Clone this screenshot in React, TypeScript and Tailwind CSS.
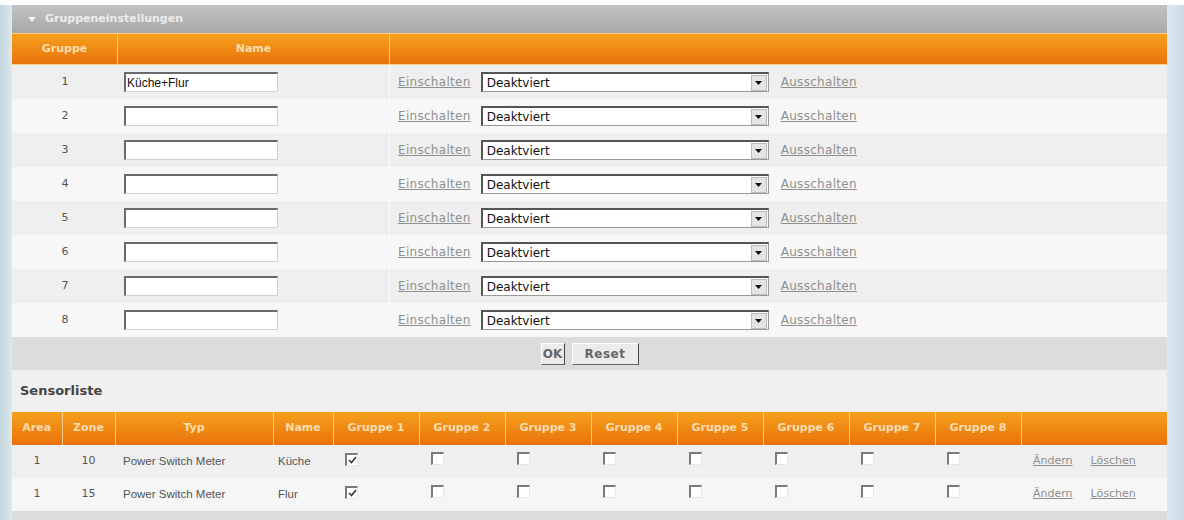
import React from "react";

const groups = [1, 2, 3, 4, 5, 6, 7, 8];

const sensors = [
  { area: 1, zone: 10, typ: "Power Switch Meter", name: "Küche" },
  { area: 1, zone: 15, typ: "Power Switch Meter", name: "Flur" },
];

function Box({ checked }: { checked?: boolean }) {
  return (
    <span className="inline-flex h-[13px] w-[13px] items-center justify-center border-t-2 border-l-2 border-r border-b border-t-[#7a7a7a] border-l-[#7a7a7a] border-r-[#e8e8e8] border-b-[#e8e8e8] bg-white">
      {checked && (
        <svg width="9" height="9" viewBox="0 0 9 9">
          <path d="M1 4 L3.5 6.5 L8 1" stroke="#333" strokeWidth="1.6" fill="none" />
        </svg>
      )}
    </span>
  );
}

function Select() {
  return (
    <div className="flex h-[20px] w-[288px] items-center border-t-2 border-l-2 border-r border-b border-t-[#555] border-l-[#555] border-r-[#999] border-b-[#999] bg-white">
      <span className="flex-1 pl-[4px] text-[12px] text-[#111] [font-family:'DejaVu_Sans',sans-serif]">Deaktviert</span>
      <span className="mr-[1px] flex h-[16px] w-[16px] items-center justify-center border border-[#bbb] bg-[#e4e4e4]">
        <svg width="7" height="4" viewBox="0 0 7 4">
          <path d="M0 0 H7 L3.5 4 Z" fill="#111" />
        </svg>
      </span>
    </div>
  );
}

export default function App() {
  return (
    <div className="h-[520px] w-[1184px] overflow-hidden bg-white [font-family:'DejaVu_Sans',sans-serif]">
      <div className="h-[5px] bg-white" />
      <div className="flex h-[515px]">
        <div className="w-[12px] bg-gradient-to-r from-[#c3d7df] to-[#dce8ee]" />
        <div className="flex w-[1155px] flex-col bg-[#f2f2f2]">
          {/* section bar */}
          <div className="flex h-[28px] items-center gap-[9px] bg-gradient-to-b from-[#c2c2c2] to-[#a8a8a8] pl-[16px]">
            <svg width="8" height="5" viewBox="0 0 8 5">
              <path d="M0 0 H8 L4 5 Z" fill="#f4f4f4" />
            </svg>
            <span className="text-[11px] font-bold text-[#ececec]">Gruppeneinstellungen</span>
          </div>

          {/* group header */}
          <div className="flex h-[32px] border-y border-[#f9cf8c] bg-gradient-to-b from-[#f5a01c] to-[#e9720a] text-[11px] font-bold text-[#fcdcb0]">
            <div className="flex w-[106px] items-center justify-center border-r border-[#f8c98a]">Gruppe</div>
            <div className="flex w-[272px] items-center justify-center border-r border-[#f8c98a]">Name</div>
            <div className="flex-1" />
          </div>

          {groups.map((g, i) => (
            <div
              key={g}
              className={`flex h-[34px] items-center ${i % 2 === 0 ? "bg-[#efefef]" : "bg-[#f7f7f7]"}`}
            >
              <div className="w-[106px] text-center text-[11px] text-[#555]">{g}</div>
              <div className="flex h-full w-[272px] items-center border-r border-[#fbfbfb] pl-[6px]">
                <div className="flex h-[20px] w-[154px] items-center border-t-2 border-l-2 border-r border-b border-t-[#6a6a6a] border-l-[#6a6a6a] border-r-[#d0d0d0] border-b-[#d0d0d0] bg-white pl-[1px] text-[12px] text-[#111] [font-family:'Liberation_Sans',sans-serif]">
                  {g === 1 ? "Küche+Flur" : ""}
                </div>
              </div>
              <div className="flex flex-1 items-center pl-[8px]">
                <a className="mr-[10px] text-[12px] tracking-[0.3px] text-[#8f8f8f] underline">Einschalten</a>
                <Select />
                <a className="ml-[12px] text-[12px] tracking-[0.3px] text-[#8f8f8f] underline">Ausschalten</a>
              </div>
            </div>
          ))}

          {/* buttons */}
          <div className="flex h-[33px] items-center justify-center gap-[7px] bg-[#dcdcdc]">
            <button className="h-[22px] w-[24px] border border-t-[#fff] border-l-[#fff] border-r-[#444] border-b-[#666] bg-[#ebebeb] text-[12px] font-bold text-[#666]">OK</button>
            <button className="h-[22px] w-[67px] border border-t-[#fff] border-l-[#fff] border-r-[#444] border-b-[#666] bg-[#ebebeb] text-[12px] font-bold tracking-[0.5px] text-[#666]">Reset</button>
          </div>

          {/* sensor list title */}
          <div className="flex h-[42px] items-center bg-[#f0f0f0] pl-[8px] text-[13px] font-bold text-[#444]">Sensorliste</div>

          <table className="w-full border-collapse text-[11px]">
            <thead>
              <tr className="h-[33px] bg-gradient-to-b from-[#f5a01c] to-[#e9720a] font-bold text-[#fcdcb0]">
                <th className="w-[50px] border-r border-[#f8c98a] font-bold">Area</th>
                <th className="w-[53px] border-r border-[#f8c98a] font-bold">Zone</th>
                <th className="w-[158px] border-r border-[#f8c98a] font-bold">Typ</th>
                <th className="w-[60px] border-r border-[#f8c98a] font-bold">Name</th>
                {groups.map((g) => (
                  <th key={g} className="w-[86px] border-r border-[#f8c98a] font-bold">
                    Gruppe {g}
                  </th>
                ))}
                <th />
              </tr>
            </thead>
            <tbody className="text-[#555]">
              {sensors.map((s, i) => (
                <tr key={s.zone} className={`h-[33px] ${i === 0 ? "bg-[#efefef]" : "bg-[#f6f6f6]"}`}>
                  <td className="text-center">{s.area}</td>
                  <td className="text-center">{s.zone}</td>
                  <td className="pl-[8px] text-[11.5px] [font-family:'Liberation_Sans',sans-serif]">{s.typ}</td>
                  <td className="pl-[5px] text-[11.5px] [font-family:'Liberation_Sans',sans-serif]">{s.name}</td>
                  {groups.map((g) => (
                    <td key={g} className="pl-[12px]">
                      <Box checked={g === 1} />
                    </td>
                  ))}
                  <td className="pl-[12px]">
                    <a className="mr-[18px] text-[#8f8f8f] underline">Ändern</a>
                    <a className="text-[#8f8f8f] underline">Löschen</a>
                  </td>
                </tr>
              ))}
            </tbody>
          </table>
          <div className="flex-1 bg-[#dcdcdc]" />
        </div>
        <div className="flex-1 bg-gradient-to-r from-[#dce8ef] to-[#c8dae5]" />
      </div>
    </div>
  );
}
